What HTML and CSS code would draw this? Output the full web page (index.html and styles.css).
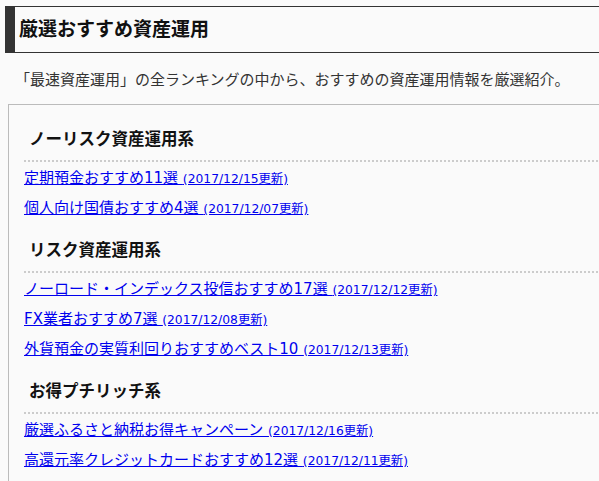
FILE: index.html
```html
<!DOCTYPE html>
<html lang="ja">
<head>
<meta charset="utf-8">
<title>厳選おすすめ資産運用</title>
<link rel="stylesheet" href="styles.css">
</head>
<body>
<div class="page">
  <h1 class="title">厳選おすすめ資産運用</h1>
  <p class="intro">「最速資産運用」の全ランキングの中から、おすすめの資産運用情報を厳選紹介。</p>
  <div class="box">
    <section class="group">
      <h2 class="group-title">ノーリスク資産運用系</h2>
      <ul class="links">
        <li><a href="#">定期預金おすすめ11選 <span class="date">(2017/12/15更新)</span></a></li>
        <li><a href="#">個人向け国債おすすめ4選 <span class="date">(2017/12/07更新)</span></a></li>
      </ul>
    </section>
    <section class="group">
      <h2 class="group-title">リスク資産運用系</h2>
      <ul class="links">
        <li><a href="#">ノーロード・インデックス投信おすすめ17選 <span class="date">(2017/12/12更新)</span></a></li>
        <li><a href="#">FX業者おすすめ7選 <span class="date">(2017/12/08更新)</span></a></li>
        <li><a href="#">外貨預金の実質利回りおすすめベスト10 <span class="date">(2017/12/13更新)</span></a></li>
      </ul>
    </section>
    <section class="group">
      <h2 class="group-title">お得プチリッチ系</h2>
      <ul class="links">
        <li><a href="#">厳選ふるさと納税お得キャンペーン <span class="date">(2017/12/16更新)</span></a></li>
        <li><a href="#">高還元率クレジットカードおすすめ12選 <span class="date">(2017/12/11更新)</span></a></li>
      </ul>
    </section>
  </div>
</div>
</body>
</html>
```
FILE: styles.css
```css
html, body {
  margin: 0;
  padding: 0;
  background: #fafafa;
  overflow: hidden;
}
body {
  font-family: "DejaVu Sans", "Noto Sans CJK JP", sans-serif;
  color: #222;
}
.page {
  padding: 6px 0 0 5px;
}
.title {
  margin: 0 -20px 0 0;
  height: 45px;
  line-height: 45px;
  padding-left: 4px;
  border-left: 10px solid #333;
  border-top: 1px solid #333;
  border-bottom: 1px solid #333;
  font-size: 19px;
  font-weight: bold;
  color: #111;
}
.intro {
  margin: 15px 0 0 10px;
  line-height: 24px;
  font-size: 15px;
  color: #333;
}
.box {
  margin: 12px -20px 0 3px;
  border: 1px solid #bbb;
  padding: 0 0 40px 15px;
}
.group {
  margin-top: 16px;
}
.group:first-child {
  margin-top: 23px;
}
.group-title {
  margin: 0;
  padding: 0 0 8px 5px;
  line-height: 24px;
  font-size: 16.5px;
  font-weight: bold;
  color: #111;
  border-bottom: 2px dotted #ccc;
}
.links {
  list-style: none;
  margin: 1px 0 0;
  padding: 0;
}
.links li {
  height: 30px;
  line-height: 30px;
  font-size: 15px;
}
.links a {
  line-height: 1;
  color: #00e;
  text-decoration: underline;
}
.date {
  font-size: 12.3px;
}
```
